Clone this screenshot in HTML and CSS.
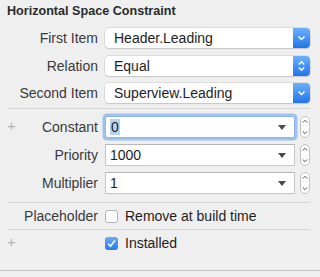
FILE: index.html
```html
<!DOCTYPE html>
<html lang="en">
<head>
<meta charset="UTF-8" />
<meta name="viewport" content="width=device-width, initial-scale=1" />
<title>Horizontal Space Constraint</title>
<link rel="stylesheet" href="styles.css">
</head>
<body>

<div class="panel">
  <h2 class="title">Horizontal Space Constraint</h2>

  <div class="group items">
    <label class="label">First Item</label>
    <div class="popup">
      <span class="popup-text">Header.Leading</span>
      <span class="popup-btn">
        <svg width="9" height="6" viewBox="0 0 9 6"><path d="M1.5 1.5 L4.5 4.5 L7.5 1.5" fill="none" stroke="#fff" stroke-width="1.5"/></svg>
      </span>
    </div>

    <label class="label">Relation</label>
    <div class="popup">
      <span class="popup-text">Equal</span>
      <span class="popup-btn">
        <svg width="9" height="12" viewBox="0 0 9 12"><path d="M1.8 4.5 L4.5 1.8 L7.2 4.5 M1.8 7.5 L4.5 10.2 L7.2 7.5" fill="none" stroke="#fff" stroke-width="1.4"/></svg>
      </span>
    </div>

    <label class="label">Second Item</label>
    <div class="popup">
      <span class="popup-text">Superview.Leading</span>
      <span class="popup-btn">
        <svg width="9" height="6" viewBox="0 0 9 6"><path d="M1.5 1.5 L4.5 4.5 L7.5 1.5" fill="none" stroke="#fff" stroke-width="1.5"/></svg>
      </span>
    </div>
  </div>

  <div class="sep"></div>

  <div class="group values">
    <label class="label"><span class="plus">+</span>Constant</label>
    <div class="field-wrap">
      <div class="field focused"><span class="sel">0</span><span class="tri"></span></div>
      <div class="stepper">
        <svg width="10" height="22" viewBox="0 0 10 22"><rect x="0.5" y="0.5" width="9" height="21" rx="4.5" fill="#fbfbfb" stroke="#c4c4c4"/><path d="M2.8 6.5 L5 4.3 L7.2 6.5 M2.8 15.5 L5 17.7 L7.2 15.5" fill="none" stroke="#555" stroke-width="1"/></svg>
      </div>
    </div>

    <label class="label">Priority</label>
    <div class="field-wrap">
      <div class="field">1000<span class="tri"></span></div>
      <div class="stepper">
        <svg width="10" height="22" viewBox="0 0 10 22"><rect x="0.5" y="0.5" width="9" height="21" rx="4.5" fill="#fbfbfb" stroke="#c4c4c4"/><path d="M2.8 6.5 L5 4.3 L7.2 6.5 M2.8 15.5 L5 17.7 L7.2 15.5" fill="none" stroke="#555" stroke-width="1"/></svg>
      </div>
    </div>

    <label class="label">Multiplier</label>
    <div class="field-wrap">
      <div class="field">1<span class="tri"></span></div>
      <div class="stepper">
        <svg width="10" height="22" viewBox="0 0 10 22"><rect x="0.5" y="0.5" width="9" height="21" rx="4.5" fill="#fbfbfb" stroke="#c4c4c4"/><path d="M2.8 6.5 L5 4.3 L7.2 6.5 M2.8 15.5 L5 17.7 L7.2 15.5" fill="none" stroke="#555" stroke-width="1"/></svg>
      </div>
    </div>
  </div>

  <div class="sep sep-wide"></div>

  <div class="check-row">
    <label class="label">Placeholder</label>
    <div class="check"><span class="box"></span>Remove at build time</div>
  </div>

  <div class="sep sep-flat"></div>

  <div class="check-row">
    <label class="label"><span class="plus">+</span>&nbsp;</label>
    <div class="check">
      <span class="box checked">
        <svg width="13" height="13" viewBox="0 0 13 13"><path d="M3.2 6.8 L5.5 9.2 L9.8 3.6" fill="none" stroke="#fff" stroke-width="1.6"/></svg>
      </span>Installed
    </div>
  </div>

  <div class="bottom"></div>
</div>

</body>
</html>
```

FILE: styles.css
```css
body {
  margin: 0;
  background-color: #efefef;
  font-family: "Liberation Sans", Arial, sans-serif;
  font-size: 14px;
  color: #222;
}
.panel {
  width: 320px;
  height: 277px;
  background: #efefef;
}
.title {
  margin: 0;
  padding: 3px 7px 0;
  height: 19px;
  font-size: 12.6px;
  line-height: 16px;
  font-weight: bold;
  color: #2b2b2b;
}
.group {
  display: grid;
  grid-template-columns: 98px 1fr;
  column-gap: 7px;
  align-items: center;
  padding-right: 10px;
}
.items {
  margin-top: 6px;
  row-gap: 7.5px;
}
.values {
  margin-top: 7px;
  row-gap: 6px;
}
.label {
  position: relative;
  text-align: right;
  line-height: 16px;
  color: #3a3a3a;
  white-space: nowrap;
}
.plus {
  position: absolute;
  left: 7px;
  top: -1px;
  color: #b5b5b5;
  font-size: 15px;
}
.popup {
  display: flex;
  align-items: stretch;
  height: 20px;
  background: #fff;
  border-radius: 4px;
  box-shadow: 0 0 0 0.5px #c9c9c9, 0 1px 1px rgba(0,0,0,0.18);
}
.popup-text {
  flex: 1;
  padding-left: 9px;
  line-height: 20px;
  color: #1e1e1e;
}
.popup-btn {
  width: 17px;
  display: flex;
  align-items: center;
  justify-content: center;
  border-radius: 0 4px 4px 0;
  background: linear-gradient(#6bb1fa, #1f75ec);
}
.sep {
  margin: 5px 10px 0 8px;
  height: 1px;
  background: #d6d6d6;
}
.sep-wide {
  margin-top: 8px;
}
.sep-flat {
  margin-top: 0;
}
.field-wrap {
  display: flex;
  align-items: center;
  gap: 5px;
}
.field {
  flex: 1;
  position: relative;
  height: 22px;
  box-sizing: border-box;
  border: 1px solid #c6c6c6;
  border-top-color: #b8b8b8;
  background: #fff;
  padding-left: 4px;
  line-height: 20px;
  color: #1e1e1e;
}
.field.focused {
  border-color: #8fb6e6;
  box-shadow: 0 0 0 2.5px #9fc3ee;
  border-radius: 2px;
}
.sel {
  background: #b5d3f5;
  padding: 0 1px;
}
.tri {
  position: absolute;
  right: 8px;
  top: 8px;
  width: 0;
  height: 0;
  border-left: 4px solid transparent;
  border-right: 4px solid transparent;
  border-top: 5px solid #4a4a4a;
}
.stepper {
  display: flex;
}
.check-row {
  display: grid;
  grid-template-columns: 98px 1fr;
  column-gap: 7px;
  align-items: center;
  height: 26px;
}
.check {
  display: flex;
  align-items: center;
  gap: 7px;
  color: #1e1e1e;
}
.box {
  display: inline-flex;
  width: 13px;
  height: 13px;
  box-sizing: border-box;
  border: 1px solid #b4b4b4;
  border-radius: 3px;
  background: #fff;
}
.box.checked {
  border: none;
  background: linear-gradient(#69adf8, #2378ea);
}
.bottom {
  margin-top: 14px;
  height: 1px;
  background: #c2c2c2;
}
```
